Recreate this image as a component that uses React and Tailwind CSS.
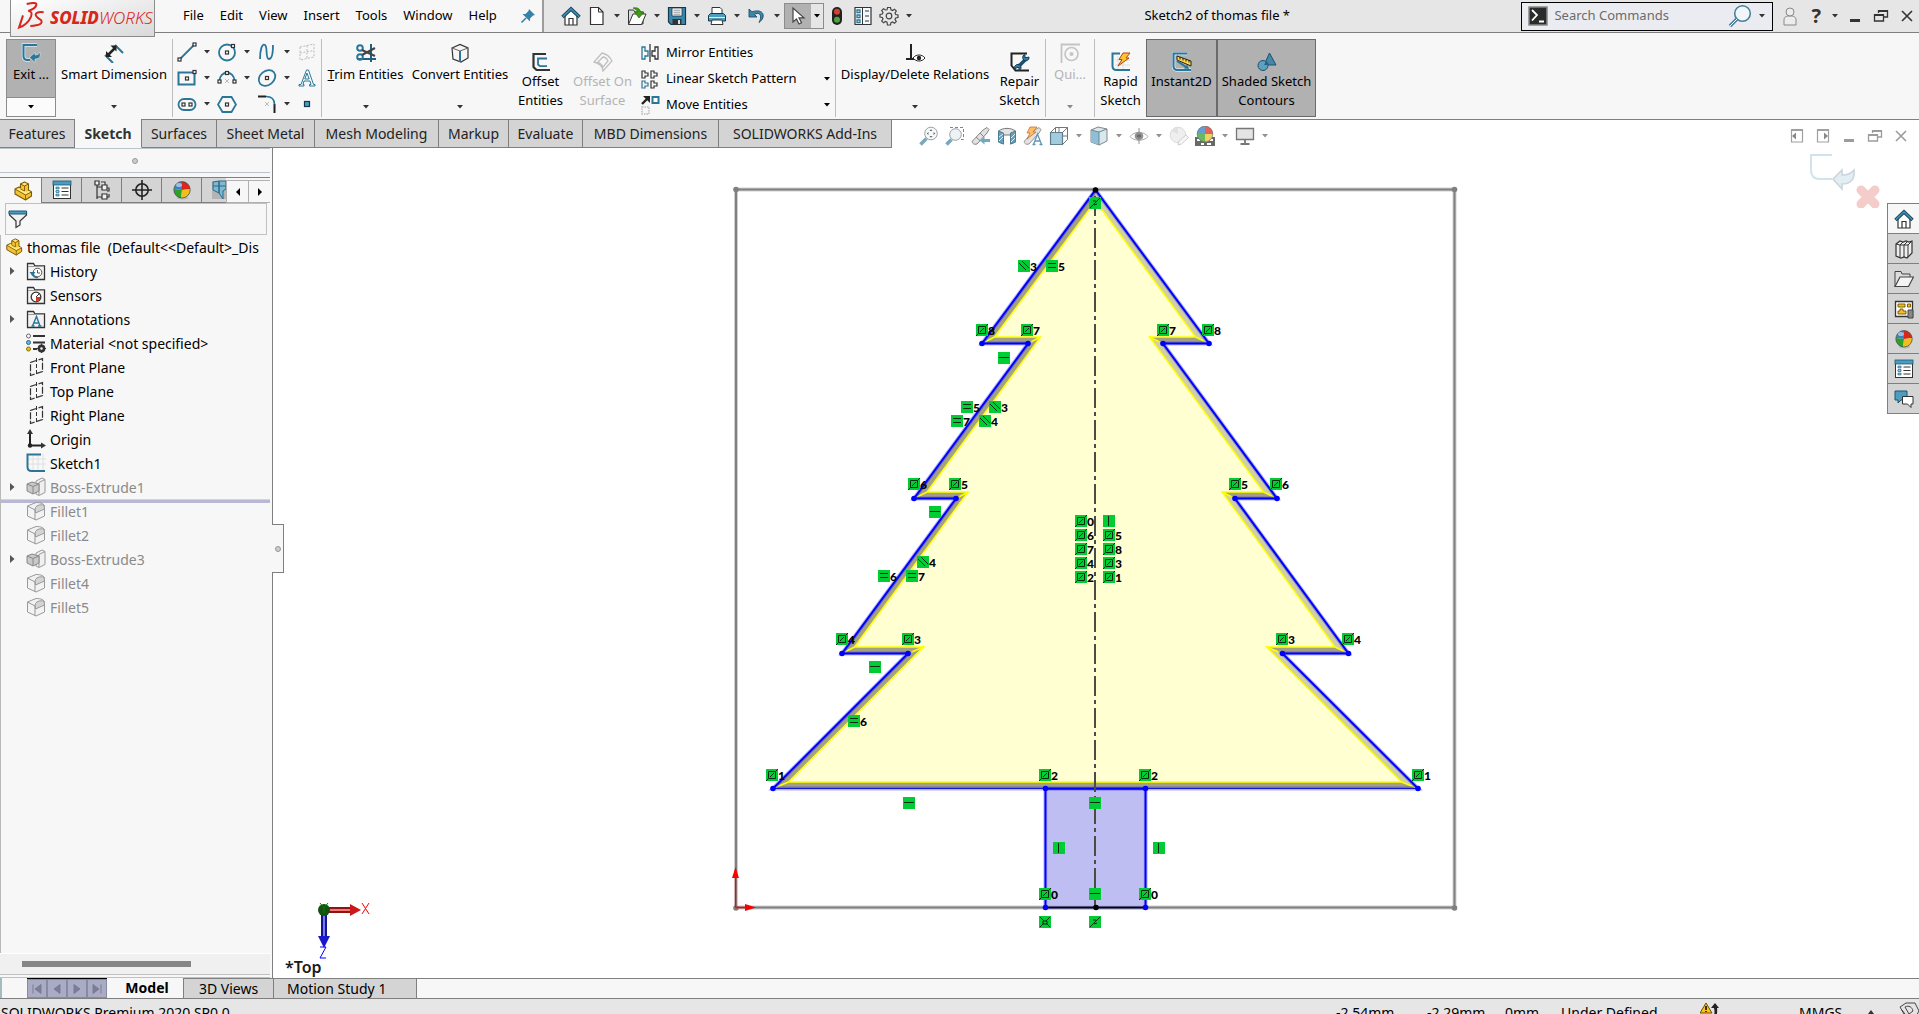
import clsx from "clsx";

// ICON BASE
const Svg = ({ children, size = "w-5 h-5", box = "0 0 20 20", className }) => (
  <svg viewBox={box} className={clsx("shrink-0", size, className)} fill="none" aria-hidden="true">
    {children}
  </svg>
);

const Caret = ({ className = "text-[#333]" }) => (
  <svg viewBox="0 0 8 4" className={clsx("w-2 h-1 shrink-0", className)} aria-hidden="true">
    <path d="M1 0h6l-3 3.4z" fill="currentColor" />
  </svg>
);

const BLUE = "#2a7699";
const DARK = "#333333";

// small square handles used on sketch tools
const Handle = ({ x, y }) => (
  <rect x={x - 1.5} y={y - 1.5} width="3" height="3" fill="#fff" stroke={DARK} strokeWidth="1.2" />
);

// SHARED ICONS
const PartIcon = ({ size }) => (
  <Svg size={size}>
    <path d="M2 8l4-2 1.5 1V3l4-2 4 2v6l3 2v4l-6 4L2 13z" fill="#f4c430" stroke="#7a5a08" strokeWidth="1.1" strokeLinejoin="round" />
    <path d="M3 8.500l3-1.500 6 3 1 .5 3.500-.5 1 1-5 2.500z" fill="#ffe680" />
    <path d="M8.500 3.200l3-1.400 3 1.400-3 1.400z" fill="#ffe680" />
    <path d="M7.500 3l4 2 4-2M11.500 5v5l-4-2M2 8l10.500 6 6-3M12.500 14v5" stroke="#7a5a08" strokeWidth=".9" />
  </Svg>
);

const ListIcon = () => (
  <Svg>
    <rect x="1.500" y="2" width="17" height="16.500" fill="#fff" stroke={DARK} />
    <rect x="1" y="1" width="18" height="4" fill="#4c9cbe" stroke="#1d5876" strokeWidth=".8" />
    <path d="M9.500 8h7M9.500 11.500h7M9.500 15h7" stroke={DARK} />
    <path d="M4 7.200h3v1.600H4zM4 10.700h3v1.600H4zM4 14.200h3v1.600H4z" fill="#fff" stroke={BLUE} />
  </Svg>
);

const BallIcon = () => (
  <Svg>
    <ellipse cx="10.500" cy="18" rx="6" ry="1.500" fill="#bbb" />
    <path d="M10 10V1.500A8.200 8.200 0 0 0 2 9z" fill="#3d7fc4" />
    <path d="M10 10V1.500A8.200 8.200 0 0 1 18.200 9z" fill="#d9271c" />
    <path d="M10 10L1.900 9A8.200 8.200 0 0 0 9 18z" fill="#2ea02a" />
    <path d="M10 10l8.200-1A8.200 8.200 0 0 1 9 18z" fill="#eebf22" />
    <circle cx="10" cy="9.800" r="8.200" stroke="#444" strokeWidth=".7" />
    <ellipse cx="7" cy="5" rx="3" ry="2" fill="#fff" opacity=".5" />
  </Svg>
);

const HouseIcon = () => (
  <Svg>
    <path d="M4 9v10h12V9l-6-6z" fill="#fff" stroke={DARK} strokeWidth="1.200" />
    <path d="M8 19v-6.500h4V19" stroke={DARK} strokeWidth="1.200" />
    <path d="M1.500 11L10 3l8.500 8" stroke="#173f55" strokeWidth="3.600" />
    <path d="M1.800 10.700L10 3l8.200 7.700" stroke="#3c8fb3" strokeWidth="1.700" />
  </Svg>
);

const ChevronBox = ({ right }) => (
  <Svg size="w-4 h-4" box="0 0 16 16">
    <path d="M2.500 2h11v12h-11z" stroke="#a0a0a0" strokeWidth="1.200" />
    <path d="M2 2h12" stroke="#a0a0a0" strokeWidth="2" />
    {right ? <path d="M9 4.500v7L13 8z" fill="#888" /> : <path d="M7 4.500v7L3 8z" fill="#888" />}
  </Svg>
);

const WinMin = () => (
  <Svg size="w-4 h-4" box="0 0 16 16"><path d="M3 12.500h10" stroke="currentColor" strokeWidth="3" /></Svg>
);
const WinRestore = () => (
  <Svg size="w-4 h-4" box="0 0 16 16">
    <path d="M5.500 5V3h9v6H11" stroke="currentColor" strokeWidth="1.300" />
    <path d="M5 3h10M1 7h10" stroke="currentColor" strokeWidth="2" />
    <path d="M1.500 7v6h9V7z" stroke="currentColor" strokeWidth="1.300" />
  </Svg>
);
const WinClose = () => (
  <Svg size="w-4 h-4" box="0 0 16 16"><path d="M3 3l10 10M13 3L3 13" stroke="currentColor" strokeWidth="1.600" /></Svg>
);

// QUICK ACCESS
const quickTools = [
  { name: "Home", icon: <HouseIcon /> },
  {
    name: "New",
    caret: true,
    icon: <Svg><path d="M3.500 1.500h8l4.500 4.500v12.500H3.500z" fill="#fff" stroke={DARK} strokeWidth="1.200" /><path d="M11.500 1.500V6H16" stroke={DARK} /></Svg>,
  },
  {
    name: "Open",
    caret: true,
    icon: (
      <Svg>
        <path d="M1.500 18V4h5l1.500 2h8v12z" fill="#ddd" stroke={DARK} />
        <path d="M1.500 18.500L6 8h13l-4.500 10.500z" fill="#fff" stroke={DARK} />
        <path d="M6 2c5-1 7 1 7.500 4H17l-5 6-4.500-6h3C10 4 8.500 3 6 2z" fill="#3d9b14" stroke="#1f5f06" strokeWidth=".6" />
      </Svg>
    ),
  },
  {
    name: "Save",
    caret: true,
    icon: (
      <Svg>
        <path d="M1.500 1.500h17v17H4l-2.500-2.500z" fill="#3b87aa" stroke="#16384a" strokeWidth="1.200" />
        <path d="M5 2h10v8H5z" fill="#fff" stroke="#16384a" strokeWidth=".8" />
        <path d="M6.500 4.200h7M6.500 6.200h7M6.500 8.200h7" stroke="#777" strokeWidth=".8" />
        <path d="M5.500 13h9v5.500h-9z" fill="#333" /><path d="M11 14h2v4h-2z" fill="#ddd" />
      </Svg>
    ),
  },
  {
    name: "Print",
    caret: true,
    icon: (
      <Svg>
        <path d="M5 8V1.500h8l2 2V8z" fill="#fff" stroke={DARK} />
        <path d="M1.500 9.500l2-2h13l2 2V15h-17z" fill="#4f9dbd" stroke="#16384a" />
        <path d="M2 11.500h16" stroke="#d8eef8" />
        <path d="M5 14h10l1 4.500H4z" fill="#fff" stroke={DARK} />
      </Svg>
    ),
  },
  {
    name: "Undo",
    caret: true,
    icon: <Svg><path d="M2 3v8h8L7.500 8.500C12 5.500 16 9 12 16.500 19.500 11 17 2 5 5.800z" fill="#3c86aa" stroke="#1c4e69" strokeWidth=".9" /></Svg>,
  },
];

const headsUp = [
  {
    name: "Zoom to Fit",
    icon: (
      <Svg>
        <path d="M1.500 18.500l6-6" stroke="#5b90ad" strokeWidth="3.500" />
        <circle cx="12" cy="7.500" r="6.300" fill="#f4f8fa" stroke="#888" />
        <path d="M12 3.200l1.600 1.800h-3.200zM12 11.800l1.600-1.800h-3.200zM7.700 7.500l1.800-1.600v3.200zM16.300 7.500l-1.800-1.600v3.200z" fill="#444" />
      </Svg>
    ),
  },
  {
    name: "Zoom to Area",
    icon: (
      <Svg>
        <path d="M5 1.500h13.500v12H15" stroke="#666" strokeDasharray="3 2" />
        <path d="M1.500 18.500l5-5" stroke="#5b90ad" strokeWidth="3.500" />
        <circle cx="10.500" cy="8.500" r="5.800" fill="#e9f0f4" stroke="#888" />
      </Svg>
    ),
  },
  {
    name: "Previous View",
    icon: (
      <Svg>
        <path d="M1.500 15L12 4l4-2.500 2 2L16 7 6 18c-3 1-5.500-1-4.500-3z" fill="#dcdcdc" stroke="#666" />
        <path d="M9 7l4 4M5 11l4.500 4" stroke="#666" />
        <path d="M9 14.500l4.500-4v2.500H19v3h-5.500v2.500z" fill="#4f93b4" />
      </Svg>
    ),
  },
  {
    name: "Section View",
    icon: (
      <Svg>
        <path d="M1.500 5C6 1.500 14 1.500 18.500 5v11l-5 2V9h-7v9l-5-2z" fill="#ddd" stroke="#555" />
        <path d="M1.500 5l5 2v11l-5-2zM13.500 7l5-2v11l-5 2z" fill="#3f88aa" stroke="#265d78" />
        <path d="M2 11l4-3M2 15l4-4M14 12l4-4M14 16l4-4" stroke="#d7edf6" />
      </Svg>
    ),
  },
  {
    name: "Dynamic Annotation Views",
    icon: (
      <Svg>
        <path d="M1.500 15L12 4l4-2.500 2 2L16 7 6 18c-3 1-5.500-1-4.500-3z" fill="#dcdcdc" stroke="#777" />
        <path d="M7 1h7l-4 5h3l-9 7 3-6H4z" fill="#ffb03a" stroke="#b34a17" strokeWidth=".8" />
        <path d="M10.500 18.500L14.500 8l4 10.500M12 15h5M9.500 18.500h3M16.500 18.500h3" stroke="#3a7fa2" strokeWidth="1.300" />
      </Svg>
    ),
  },
  {
    name: "View Orientation",
    caret: true,
    icon: (
      <Svg>
        <path d="M1.500 6.500l5-5h12v12l-5 5M13.500 6.500l5-5M6.500 1.500V6M10 1.500V6M14 10h4.500" stroke="#555" />
        <path d="M1.500 6.500h12v12h-12z" fill="#8bbfd6" stroke="#3a5f70" strokeWidth="1.200" />
      </Svg>
    ),
  },
  {
    name: "Display Style",
    caret: true,
    icon: (
      <Svg>
        <path d="M2 4l7-3 9 2v12l-8 4-8-3z" fill="#cfe3ec" stroke="#666" />
        <path d="M2 4l8 2v13l-8-3z" fill="#74b0cb" /><path d="M2 4l8 2 8-3M10 6v13" stroke="#4a6a78" />
      </Svg>
    ),
  },
  {
    name: "Hide/Show Items",
    caret: true,
    icon: (
      <Svg>
        <path d="M1 10.500C5 5 15 5 19 10.500 15 15.500 5 15.500 1 10.500z" fill="#fff" stroke="#999" />
        <circle cx="10" cy="10" r="4.300" fill="#777" /><circle cx="10" cy="10" r="1.800" fill="#222" />
        <path d="M10 2v16" stroke="#777" />
      </Svg>
    ),
  },
  {
    name: "Edit Appearance",
    icon: (
      <Svg>
        <circle cx="9" cy="9" r="7.800" fill="#ececec" stroke="#d2d2d2" /><path d="M3 5a8 8 0 0 1 6-3.500v7z" fill="#dadada" />
        <path d="M9 19l1-4 7-6 2.500 2.500-7 6.500z" fill="#f4f4f4" stroke="#c4c4c4" />
      </Svg>
    ),
  },
  {
    name: "Apply Scene",
    caret: true,
    icon: (
      <Svg>
        <path d="M0 11h20v9H0z" fill="#444" />
        <path d="M2 13h3v2H2zM6 17h3v2H6zM15 13h3v2h-3zM12 17h4v2h-4z" fill="#fff" />
        <path d="M10 8V0a8 8 0 0 0-8 8z" fill="#3f86c8" /><path d="M10 8V0a8 8 0 0 1 8 8z" fill="#e03a2c" />
        <path d="M10 8H2a8 8 0 0 0 8 8z" fill="#45a838" /><path d="M10 8h8a8 8 0 0 1-8 8z" fill="#eec63b" />
        <circle cx="10" cy="8" r="7.800" stroke="#555" strokeWidth=".7" />
      </Svg>
    ),
  },
  {
    name: "View Settings",
    caret: true,
    icon: <Svg><path d="M1.500 2.500h17v11h-17z" fill="#dedede" stroke="#555" strokeWidth="1.300" /><path d="M10 14v4M5.500 18h9" stroke="#555" strokeWidth="1.800" /></Svg>,
  },
];

// SKETCH TOOL GRID, row by row
const sketchTools = [
  { name: "Line", caret: true, icon: <Svg><path d="M3 17L17 3" stroke={BLUE} strokeWidth="1.800" /><Handle x={2.500} y={17.500} /><Handle x={17.500} y={2.500} /></Svg> },
  { name: "Circle", caret: true, icon: <Svg><circle cx="10" cy="10.500" r="8" stroke={BLUE} strokeWidth="1.800" /><Handle x={10} y={10.500} /><Handle x={16} y={4} /></Svg> },
  { name: "Spline", caret: true, icon: <Svg><path d="M3 17C3 8 5 1 8 3c3 2 0 14 4 14 3 0 4-7 4-14" stroke={BLUE} strokeWidth="1.800" /></Svg> },
  { name: "Plane", icon: <Svg><path d="M3 5l14-3v13L3 18zM10 3.500v13M3 11l14-2.500" stroke="#bbb" strokeDasharray="2 1.500" /></Svg> },
  { name: "Rectangle", caret: true, icon: <Svg><path d="M1.500 4.500h16v12h-16z" stroke={BLUE} strokeWidth="2" /><Handle x={10} y={10.500} /><Handle x={17.500} y={4} /></Svg> },
  { name: "Arc", caret: true, icon: <Svg><path d="M2.500 13c0-11 15-11 15 0" stroke={BLUE} strokeWidth="1.800" /><path d="M8 11l4 4M12 11l-4 4" stroke="#bbb" /><Handle x={2.500} y={13.500} /><Handle x={17.500} y={13.500} /><Handle x={10} y={5} /></Svg> },
  { name: "Ellipse", caret: true, icon: <Svg><ellipse cx="10" cy="10" rx="9" ry="7" transform="rotate(-40 10 10)" stroke={BLUE} strokeWidth="1.800" /><Handle x={10} y={10} /></Svg> },
  { name: "Text", icon: <Svg><path d="M2 18h5v-1.500H6L7 13h6l1 3.500h-1.500V18H18v-1.500h-1.500L11.500 2h-2L4 16.500H2zM7.800 11L10 5l2.200 6z" fill="#fff" stroke={BLUE} /></Svg> },
  { name: "Slot", caret: true, icon: <Svg><rect x="1.500" y="5" width="17" height="11" rx="5.500" stroke={BLUE} strokeWidth="1.800" /><Handle x={6.500} y={10.500} /><Handle x={13.500} y={10.500} /></Svg> },
  { name: "Polygon", icon: <Svg><path d="M5.500 3h9l4.500 7.500L14.500 18h-9L1 10.500z" stroke={BLUE} strokeWidth="1.800" /><Handle x={10} y={10.500} /></Svg> },
  { name: "Fillet", caret: true, icon: <Svg><path d="M1 2.500h8M17.500 10v9" stroke="#222" strokeWidth="2" /><path d="M9 2.500c6 0 8.500 3 8.500 8" stroke={BLUE} strokeWidth="1.600" /><path d="M8 8l4 4M12 8l-4 4" stroke="#bbb" /></Svg> },
  { name: "Point", icon: <Svg><rect x="7.500" y="7.500" width="5" height="5" fill="#4a9dc2" stroke="#16384a" strokeWidth="1.200" /></Svg> },
];

const patternTools = [
  {
    name: "Mirror Entities",
    icon: <Svg><path d="M2 4h3v4h3v5H5v3H2z" stroke={BLUE} strokeWidth="1.300" /><path d="M18 4h-3v4h-3v5h3v3h3z" stroke={DARK} strokeWidth="1.300" /><path d="M10 1v18" stroke="#000" /></Svg>,
  },
  {
    name: "Linear Sketch Pattern",
    caret: true,
    icon: (
      <Svg>
        <path d="M2 2h3v2h3v3H5v2H2zM11 2h3v2h3v3h-3v2h-3zM11 12h3v2h3v3h-3v2h-3z" stroke={DARK} strokeWidth="1.200" />
        <path d="M2 12h3v2h3v3H5v2H2z" stroke={BLUE} strokeWidth="1.200" />
      </Svg>
    ),
  },
  {
    name: "Move Entities",
    caret: true,
    icon: (
      <Svg>
        <path d="M2 9l6-6" stroke="#222" strokeWidth="2.400" /><path d="M3 1h7v7z" fill="#222" />
        <rect x="12.500" y="2" width="6" height="6" fill="#fff" stroke={BLUE} strokeWidth="2" />
        <rect x="2" y="12" width="7" height="7" stroke="#bbb" strokeDasharray="1.500 1" strokeWidth="1.500" />
      </Svg>
    ),
  },
];

const ExitIcon = () => (
  <Svg>
    <path d="M16 2H2.500v11q0 4 4 4H9" stroke="#dcecf4" strokeWidth="3.500" />
    <path d="M16 2H2.500v11q0 4 4 4H9" stroke={BLUE} strokeWidth="2" />
    <path d="M8.500 14.500l5.500-5V12c3 0 4-1 5-3 1 5-1 7-5 7v3.500z" fill={BLUE} stroke="#dcecf4" strokeWidth=".6" />
  </Svg>
);
const DimensionIcon = () => (
  <Svg>
    <path d="M11 2l8 8M1 12l8 8" stroke={BLUE} strokeWidth="2" />
    <path d="M4 12L11 5" stroke="#222" strokeWidth="2.500" /><path d="M6.500 2.500h6v6zM2 8v6h6z" fill="#222" />
  </Svg>
);
const TrimIcon = () => (
  <Svg>
    <path d="M1 16h19M15 1v18" stroke="#1f5f80" strokeWidth="2" />
    <circle cx="4" cy="5" r="2.800" stroke={BLUE} strokeWidth="2" /><circle cx="4" cy="14" r="2.800" stroke={BLUE} strokeWidth="2" />
    <path d="M6 7l13 6M6 12l13-7" stroke="#444" strokeWidth="2" />
  </Svg>
);
const ConvertIcon = () => (
  <Svg>
    <path d="M2 5l8-3.500L18 5v10l-7 4-8-3z" fill="#f5f5f5" stroke={DARK} strokeWidth="1.200" />
    <path d="M2 5l8 3 8-3" stroke="#666" /><path d="M10 8v11" stroke={BLUE} strokeWidth="2" />
  </Svg>
);
const OffsetIcon = () => (
  <Svg><path d="M15 2H2.500v13l3 3H19" stroke="#333" strokeWidth="2.200" /><path d="M16 6.500H7v6l2 1.700h7" stroke={BLUE} strokeWidth="1.800" /></Svg>
);
const OffsetSurfaceIcon = () => (
  <Svg><path d="M1 10L9 1c5 1 8 4 10 8l-9 10c0-4-4-8-9-9zM5 10l5-5c2 0 4 2 5 4l-5 6c-1-2-3-4-5-5z" stroke="#c0c0c0" strokeWidth="1.300" /></Svg>
);
const RelationsIcon = () => (
  <Svg>
    <path d="M6 1v14M1 16h11" stroke="#222" strokeWidth="2" />
    <path d="M8 15c3-4 9-4 12 0-3 4-9 4-12 0z" fill="#fff" stroke="#222" /><circle cx="14" cy="15" r="2.200" fill="#222" />
  </Svg>
);
const RepairIcon = () => (
  <Svg>
    <path d="M17 1.500H1.500v12l4 5H19" stroke="#222" strokeWidth="2" />
    <path d="M8 15l8-8" stroke="#1e4f6a" strokeWidth="3.500" />
    <path d="M19 5a3.200 3.200 0 1 1-4-2.500v3h2zM5 17a3.200 3.200 0 1 1 4 1.500v-3H7z" fill="#2f7da2" stroke="#173f55" />
  </Svg>
);
const SnapIcon = () => (
  <Svg><path d="M1.500 20V1.500H20" stroke="#c4c4c4" strokeWidth="1.800" /><circle cx="11.500" cy="11" r="6.500" stroke="#c4c4c4" strokeWidth="1.600" /><circle cx="11.500" cy="11" r="2" fill="#c4c4c4" /></Svg>
);
const RapidIcon = () => (
  <Svg>
    <path d="M7 4v14M12 4v14M4 8h15M4 13h15" stroke="#ddd" />
    <path d="M9 1.500H1.500V14q0 4 4 4H19" stroke={BLUE} strokeWidth="2" />
    <path d="M12 1h7l-4 5h3L7 14l4-6.500H8z" fill="#ffc62e" stroke="#b3431a" />
  </Svg>
);
const InstantIcon = () => (
  <Svg>
    <path d="M15 1.500H1.500V14q0 4 4 4H19" stroke="#dbe9f0" strokeWidth="3.600" />
    <path d="M15 1.500H1.500V14q0 4 4 4H19" stroke={BLUE} strokeWidth="2" />
    <path d="M5 4l14 5v5L5 8z" fill="#ffd83c" stroke="#222" /><path d="M8 5v2.500M11 6v2.500M14 7v2.500M17 8v2.500" stroke="#222" />
    <path d="M5 9l9 6" stroke={BLUE} strokeWidth="2" /><path d="M17 17l-5-.5 3-4z" fill={BLUE} />
  </Svg>
);
const ShadedIcon = () => (
  <Svg>
    <path d="M12.500 1L19 13H7z" fill="#4587a8" stroke="#1c5270" /><circle cx="6" cy="13.500" r="5" fill="#5fa0bf" stroke="#1c5270" /><path d="M7 13h4.500a5 5 0 0 0-2.500-4z" fill="#22658a" />
  </Svg>
);

// FEATURE TREE ICONS
const FolderIcon = ({ children }) => (
  <Svg><path d="M1.500 18.500v-16h6l1.500 2.500h9.500v13.500z" fill="#f2f2f2" stroke={DARK} strokeWidth="1.300" /><path d="M2 5.500h16" stroke="#999" />{children}</Svg>
);
const PlaneIcon = () => (
  <Svg><path d="M4.500 5.500l12-4v13l-12 4z" stroke={DARK} strokeWidth="1.200" strokeDasharray="7 1.500" /><path d="M10.500 1v18" stroke={DARK} strokeDasharray="4 2" /></Svg>
);
const ExtrudeIcon = () => (
  <Svg>
    <path d="M10 4l6-3 3 1.500v13l-6 3-3-1.500z" fill="#f0f0f0" stroke="#999" /><path d="M13 5.500l6-3M13 5.500V18" stroke="#999" />
    <path d="M1 7l5-2 7 2v7l-6 3-6-3z" fill="#c9c9c9" stroke="#888" /><path d="M1 7l6 2.500L13 7M7 9.500V17" stroke="#888" />
  </Svg>
);
const FilletIcon = () => (
  <Svg>
    <path d="M1.500 5L10 1.500c5 0 8.500 1 8.500 5v8.500L10 19l-8.500-4z" fill="#f2f2f2" stroke="#999" />
    <path d="M9 9c0-3 2-6 9-5l.5 4L9.500 12z" fill="#d4d4d4" stroke="#999" /><path d="M1.500 5L9 9v10" stroke="#999" />
  </Svg>
);

const tree = [
  {
    label: "History",
    open: true,
    icon: <FolderIcon><circle cx="11.500" cy="11.500" r="4.300" fill="#fff" stroke="#555" /><path d="M11.500 9v3h2.500" stroke="#555" /><path d="M3.500 11h6l-3 4z" fill={BLUE} /><path d="M6 11c0 4 3 6 6 5.500" stroke={BLUE} strokeWidth="1.500" /></FolderIcon>,
  },
  { label: "Sensors", icon: <FolderIcon><circle cx="10" cy="12" r="4.800" fill="#fff" stroke="#333" strokeWidth="1.300" /><path d="M10 12l3-3" stroke="#333" /><path d="M10 12h4.500a4 4 0 0 1-4.500 4z" fill="#d9341e" /></FolderIcon> },
  { label: "Annotations", open: true, icon: <FolderIcon><path d="M6.500 17L10.500 7.500 14 17M8 14h5M5.500 17h3M12 17h3.500" stroke={BLUE} strokeWidth="1.400" /></FolderIcon> },
  {
    label: "Material <not specified>",
    icon: (
      <Svg>
        <circle cx="2.500" cy="3" r="2" fill="#fff" stroke="#666" /><circle cx="2.500" cy="9.500" r="2" fill="#67b7dc" stroke="#2a6a88" /><circle cx="2.500" cy="16" r="2" fill="#f4c020" stroke="#8a6a08" />
        <path d="M7 3h12M7 9.500h12M7 16h4" stroke={DARK} strokeWidth="2" /><circle cx="15.500" cy="15.500" r="2.600" stroke={DARK} strokeWidth="2.600" />
        <path d="M15.500 10.500v10M10.500 15.500h10" stroke={DARK} strokeWidth="1.200" strokeDasharray="2 6" />
      </Svg>
    ),
  },
  { label: "Front Plane", icon: <PlaneIcon /> },
  { label: "Top Plane", icon: <PlaneIcon /> },
  { label: "Right Plane", icon: <PlaneIcon /> },
  { label: "Origin", icon: <Svg><path d="M4 3v13.500h13" stroke="#222" strokeWidth="2" /><path d="M4 0l3 5H1zM20 16.500l-5-3v6z" fill="#333" /><circle cx="4" cy="16.500" r="2.200" fill="#222" /></Svg> },
  { label: "Sketch1", icon: <Svg><path d="M7 1v17M12 1v17M17 1v17M2 6h18M2 11h18" stroke="#e0e0e0" /><path d="M15 1.500H1.500V14q0 4 4 4H19" stroke={BLUE} strokeWidth="2" /></Svg> },
  { label: "Boss-Extrude1", open: true, off: true, icon: <ExtrudeIcon />, rollback: true },
  { label: "Fillet1", off: true, icon: <FilletIcon /> },
  { label: "Fillet2", off: true, icon: <FilletIcon /> },
  { label: "Boss-Extrude3", open: true, off: true, icon: <ExtrudeIcon /> },
  { label: "Fillet4", off: true, icon: <FilletIcon /> },
  { label: "Fillet5", off: true, icon: <FilletIcon /> },
];

const managerTabs = [
  { name: "PropertyManager", icon: <ListIcon /> },
  {
    name: "ConfigurationManager",
    icon: <Svg><path d="M3 1h4v4H3zM5 5v14M5 7h5M5 17h5M10 5h5v5h-5zM10 14h5v5h-5zM9 2h4v3M15 8h2v3h-2M15 17h2v-3" stroke={DARK} strokeWidth="1.200" fill="#f2f2f2" /></Svg>,
  },
  { name: "DimXpertManager", icon: <Svg><circle cx="10" cy="10" r="6.200" stroke="#222" strokeWidth="1.600" /><path d="M10 0v20M0 10h20" stroke="#222" strokeWidth="1.600" /></Svg> },
  { name: "DisplayManager", icon: <BallIcon /> },
];

const taskPane = [
  { name: "Resources", icon: <HouseIcon /> },
  {
    name: "Design Library",
    icon: <Svg><path d="M2 5l4-3 3 1 3-1 3 1 3-1v12l-5 5-3-1-3 1-5-2z" fill="#eee" stroke={DARK} strokeWidth="1.200" /><path d="M6 6v12M10 6v12M14 6v12M2 5l4 1 3-3M6 6l4 0 3-3M10 6h4l3-3" stroke={DARK} /></Svg>,
  },
  { name: "File Explorer", icon: <Svg><path d="M1 17.500V2.500h6l1 2.500h8v3" fill="#ddd" stroke="#444" /><path d="M1 17.500L6 8h13.500l-5 9.500z" fill="#f4f4f4" stroke="#444" strokeWidth="1.200" /></Svg> },
  {
    name: "View Palette",
    icon: (
      <Svg>
        <path d="M1.500 2.500h17v15h-17z" fill="#fff" stroke={DARK} strokeWidth="1.300" />
        <path d="M4 5h7v3H4zM13.500 5h3v3h-3zM4 15v-3h2v-2h3v2h3v3z" fill="#f4c020" stroke="#6d5205" strokeWidth=".9" /><path d="M14 11h5v8h-5z" fill="#888" stroke="#444" />
      </Svg>
    ),
  },
  { name: "Appearances", icon: <BallIcon /> },
  { name: "Custom Properties", icon: <ListIcon /> },
  {
    name: "Forum",
    icon: <Svg><path d="M1 2h12v9H7l-3 3v-3H1z" fill="#4f9dbd" stroke="#1c5270" /><path d="M8.500 7.500h10.500V15h-2v3.500L13.500 15h-5z" fill="#fff" stroke={DARK} /></Svg>,
  },
];

// SKETCH GEOMETRY (graphics area units)
const treeOutline = "1095.500,190 1209,343.500 1163,343.500 1277,498.500 1235,498.500 1348.500,653.500 1282.500,653.500 1418,788.500 773,788.500 908,653.500 842,653.500 956,498.500 914,498.500 1028,343.500 982,343.500";
const treeFace = "1095.500,201 1195.500,337 1149.500,337 1263.500,492 1222,492 1335,647 1266.500,647 1401.500,782 788.500,782 923.500,647 854.500,647 968,492 927,492 1040.500,337 994.500,337";

const sketchPoints = [
  [1209, 343.5], [1163, 343.5], [1277, 498.5], [1235, 498.5], [1348.5, 653.5], [1282.5, 653.5], [1418, 788.5],
  [773, 788.5], [908, 653.5], [842, 653.5], [956, 498.5], [914, 498.5], [1028, 343.5], [982, 343.5],
  [1045.5, 788.5], [1145.5, 788.5], [1045.5, 907.5], [1145.5, 907.5],
];

// type, x, y, number
const relations = [
  ["mid", 1095, 203], ["par", 1024, 266, 3], ["eq", 1052, 266, 5],
  ["sym", 982, 330, 8], ["sym", 1027, 330, 7], ["sym", 1163, 330, 7], ["sym", 1208, 330, 8],
  ["hor", 1004, 358], ["eq", 967, 407, 5], ["par", 995, 407, 3], ["eq", 957, 421, 7], ["par", 985, 421, 4],
  ["sym", 914, 484, 6], ["sym", 955, 484, 5], ["sym", 1235, 484, 5], ["sym", 1276, 484, 6], ["hor", 935, 512],
  ["sym", 1081, 521, 0], ["ver", 1109, 521], ["sym", 1081, 535, 6], ["sym", 1109, 535, 5],
  ["sym", 1081, 549, 7], ["sym", 1109, 549, 8], ["sym", 1081, 563, 4], ["sym", 1109, 563, 3],
  ["sym", 1081, 577, 2], ["sym", 1109, 577, 1],
  ["par", 923, 562, 4], ["eq", 884, 576, 6], ["eq", 912, 576, 7],
  ["sym", 842, 639, 4], ["sym", 908, 639, 3], ["sym", 1282, 639, 3], ["sym", 1348, 639, 4], ["hor", 875, 667],
  ["eq", 854, 721, 6], ["sym", 772, 775, 1], ["sym", 1045, 775, 2], ["sym", 1145, 775, 2], ["sym", 1418, 775, 1],
  ["hor", 909, 803], ["hor", 1095, 803], ["ver", 1059, 848], ["ver", 1159, 848],
  ["sym", 1045, 894, 0], ["hor", 1095, 894], ["sym", 1145, 894, 0], ["coin", 1045, 922], ["mid", 1095, 922],
];

const relationMarks = {
  hor: "M-5-.5h10",
  ver: "M-.5-5v10",
  eq: "M-4-2.500h8M-4 1.500h8",
  par: "M-5-3l7 7M-2-5l7 7",
  sym: "M-3.500-3.500h7v7h-7zM-2 2l4-4M4-4l2-2M-6 6l2-2",
  mid: "M-5 5L5-5M-2-2l3 0M-1 2l3-1",
  coin: "M-5 5l4-4M5 5L1 1M-5-5l4 4M5-5L1-1M-2-1h4v3h-4z",
};

function Relation({ type, x, y, num }) {
  return (
    <g transform={`translate(${x} ${y})`}>
      <rect x="-6" y="-6" width="12" height="12" fill="#00cc33" />
      <path d={relationMarks[type]} stroke="#0b2a10" strokeWidth="1" />
      {num !== undefined && (
        <text x="6" y="5" className="font-['Lato'] font-black text-[12px]" fill="#000">{num}</text>
      )}
    </g>
  );
}

function SketchCanvas() {
  return (
    <svg viewBox="273 148 1646 830" preserveAspectRatio="xMinYMin meet" className="absolute inset-0 w-full h-full" fill="none">
      {/* BASE SQUARE */}
      <rect x="736" y="189.500" width="718.500" height="718" stroke="#cfcfcf" strokeWidth="4" />
      <rect x="736" y="189.500" width="718.500" height="718" stroke="#808080" strokeWidth="2" />
      <circle cx="736" cy="189.500" r="2.800" fill="#808080" />
      <circle cx="1454.500" cy="189.500" r="2.800" fill="#808080" />
      <circle cx="1454.500" cy="908" r="2.800" fill="#808080" />
      <circle cx="736" cy="908" r="2.800" fill="#808080" />

      {/* TRUNK */}
      <rect x="1045.500" y="788.500" width="100" height="119" fill="#bebef2" stroke="#a9a9f5" strokeWidth="4" />
      <path d="M1045.500 907.500v-119h100v119" stroke="#0000ff" strokeWidth="2" />
      <path d="M1046 907.500h99" stroke="#000" strokeWidth="2" />

      {/* TREE BODY */}
      <polygon points={treeOutline} fill="#a3a182" />
      <path d="M1095.500 190L1209 343.500l-13.500-6.500L1095.500 201zM1149.500 337l13.500 6.500L1277 498.500l-13.500-6.500zM1222 492l13 6.500 113.500 155-13.500-6.500zM1266.500 647l16 6.500L1418 788.500l-16.500-6.500z" fill="#d0d0a4" />
      <polygon points={treeFace} fill="#ffffd2" stroke="#ffff00" strokeWidth="1.500" />
      <path d="M982 343.500l12.500-6.500M1028 343.500l12.500-6.500M1209 343.500l-13.500-6.500M1163 343.500l-13.500-6.500M914 498.500l13-6.500M956 498.500l12-6.500M1277 498.500l-13.500-6.500M1235 498.500l-13-6.500M842 653.500l12.500-6.500M908 653.500l15.500-6.500M1348.500 653.500l-13.500-6.500M1282.500 653.500l-16-6.500M773 788.500l15.500-6.500M1418 788.500l-16.500-6.500" stroke="#ffff00" strokeWidth="1.500" />
      <polygon points={treeOutline} stroke="#0000ff" strokeOpacity=".3" strokeWidth="4" />
      <path d="M773 788.500l135-135h-66L956 498.500h-42L1028 343.500h-46L1095.500 190 1209 343.500h-46L1277 498.500h-42L1348.500 653.500h-66L1418 788.500" stroke="#0000ff" strokeWidth="2" />
      <path d="M773 788.500h645" stroke="#1414d8" strokeWidth="1.200" />
      <path d="M1045.500 788.500h100" stroke="#0000ff" strokeWidth="2" />

      {/* CENTERLINE */}
      <path d="M1095 196v712" stroke="#4c4c44" strokeWidth="2" strokeDasharray="20 4 4 4" />

      {sketchPoints.map(([x, y]) => (
        <circle key={`${x}-${y}`} cx={x} cy={y} r="2.800" fill="#0000ff" />
      ))}
      <circle cx="1095.500" cy="190" r="2.800" fill="#000" />
      <circle cx="1096" cy="907.500" r="2.800" fill="#000" />

      {relations.map(([type, x, y, num]) => (
        <Relation key={`${x}-${y}`} type={type} x={x} y={y} num={num} />
      ))}

      {/* ORIGIN */}
      <path d="M735.500 907.500V870M735.500 907.500H750" stroke="#ff0000" strokeWidth="1.300" />
      <path d="M735.500 867l3.500 11h-7zM756 907.500l-11-3.500v7z" fill="#ff0000" />

      {/* TRIAD */}
      <path d="M328 910h24" stroke="#8c1414" strokeWidth="6" />
      <path d="M328 910h24" stroke="#f07878" strokeWidth="2" />
      <path d="M350 904l11 6-11 6z" fill="#cc1818" />
      <path d="M324 914v24" stroke="#14148c" strokeWidth="6" />
      <path d="M324 914v24" stroke="#7878f0" strokeWidth="2" />
      <path d="M318 936h12l-6 12z" fill="#1818cc" />
      <circle cx="324" cy="910" r="6" fill="#145014" />
      <path d="M320 903l4 5 4-5M324 908v5" stroke="#008000" />
      <path d="M362 903l7 11M369 903l-7 11" stroke="#ff0000" />
      <path d="M320 947h6l-6 11h6" stroke="#0000ff" />
      <text x="285" y="973" className="font-['Noto_Sans'] font-semibold text-[16px]" fill="#1a1a1a">*Top</text>
    </svg>
  );
}

// RIBBON PARTS
const Divider = () => <div className="w-px h-[78px] bg-[#bdbdbd] shrink-0" />;

function TallButton({ icon, label, width, off }) {
  return (
    <button className={clsx("h-[78px] flex flex-col items-center pt-1 shrink-0", width, off && "text-[#b4b4b4]")}>
      {icon}
      <span className="mt-px leading-5 whitespace-nowrap">{label}</span>
      <Caret className={clsx("mt-auto mb-2", off ? "text-[#888]" : "text-[#333]")} />
    </button>
  );
}

function WrapButton({ icon, lines, width, off, pressed }) {
  return (
    <button
      className={clsx(
        "h-[78px] flex flex-col items-center shrink-0 leading-[19px] whitespace-nowrap",
        width,
        off && "text-[#b4b4b4]",
        pressed ? "bg-[#b1b1b1] border border-[#6a6a6a] pt-3" : "pt-[13px]"
      )}
    >
      {icon}
      {lines.map((line) => (
        <span key={line}>{line}</span>
      ))}
    </button>
  );
}

function TitleBar() {
  return (
    <header className="relative z-10 h-[33px] flex items-center bg-[#e6e6e6] border-b border-[#7f7f7f] shrink-0">
      <div className="h-full w-[544px] pl-[10px] flex items-center border-r-2 border-[#9c9c9c] bg-[#f7f7f7] shrink-0">
        <div className="self-start w-[145px] h-[37px] shrink-0 flex items-center pl-[5px] border border-t-0 border-[#8c8c8c] bg-linear-to-br from-white to-[#d9d9d9] text-[#d9261c] text-[17px] italic">
          <Svg size="w-[30px] h-[30px]" box="45 0 90 90" className="self-start mr-1">
            <path d="M77 12Q108 4 106 15Q104 25 82 33Q96 34 90 50Q80 74 54 83L66 46M128 37Q104 34 104 44Q104 50 120 60Q130 76 88 78" stroke="#d9261c" strokeWidth="6" />
          </Svg>
          <span className="font-extrabold">SOLID</span>
          <span className="font-light">WORKS</span>
        </div>
        <nav className="ml-7 flex items-center gap-4">
          {["File", "Edit", "View", "Insert", "Tools", "Window", "Help"].map((item) => (
            <button key={item}>{item}</button>
          ))}
        </nav>
        <button aria-label="Pin menu" className="ml-auto mr-1.5">
          <Svg size="w-4 h-4" box="0 0 16 16" className="text-[#3583a8]">
            <path d="M9 1l6 6-2 .5-3 3v3L2.500 6h3l3-3z" fill="currentColor" /><path d="M6 10l-4.500 4.500" stroke="currentColor" strokeWidth="1.600" />
          </Svg>
        </button>
      </div>

      {/* QUICK ACCESS */}
      <div className="ml-[17px] flex items-center gap-[3px]">
        <div className="flex items-center gap-1.5">
          {quickTools.map((tool) => (
            <button key={tool.name} aria-label={tool.name} className="flex items-center gap-1.5">
              {tool.icon}
              {tool.caret && <Caret />}
            </button>
          ))}
        </div>
        <button aria-label="Select" className="h-[26px] w-10 flex items-center border border-[#8c8c8c]">
          <span className="h-full w-[26px] flex items-center justify-center bg-[#b1b1b1]">
            <Svg><path d="M5 2v14l3.500-3 2.500 5 2.500-1.200-2.500-5H16z" fill="#fff" stroke="#444" strokeWidth="1.200" /></Svg>
          </span>
          <Caret className="ml-0.5" />
        </button>
        <div className="flex items-center gap-1.5">
          <button aria-label="Rebuild">
            <Svg><rect x="5" y="1" width="10" height="18" rx="5" fill="#222" /><circle cx="10" cy="5.800" r="3" fill="#d6402e" /><circle cx="10" cy="13.800" r="3" fill="#4da63c" /></Svg>
          </button>
          <button aria-label="File properties">
            <Svg><path d="M2 1.500h16v17H2z" fill="#f4f8fa" stroke="#333" strokeWidth="1.200" /><path d="M9.500 2v16M12 5h4M12 10h4M12 15h4" stroke="#333" /><path d="M4 4h3v2.500H4zM4 9h3v2.500H4zM4 14h3v2.500H4z" stroke={BLUE} strokeWidth="1.300" /></Svg>
          </button>
          <button aria-label="Options" className="flex items-center gap-1.5">
            <Svg>
              <circle cx="10" cy="10" r="2.800" stroke="#444" strokeWidth="1.200" />
              <path d="M8.500 1.500h3l.5 2.300 1.500.7 2-1.300 1.800 1.800-1.300 2 .7 1.500 2.300.5v2.500l-2.300.5-.7 1.500 1.300 2-1.800 1.800-2-1.300-1.500.7-.5 2.300h-3L8 16.200l-1.500-.7-2 1.300L2.700 15 4 13l-.7-1.500L1 11V8.500L3.300 8 4 6.500l-1.300-2 1.800-1.800 2 1.300L8 3.800z" stroke="#444" strokeWidth="1.200" />
            </Svg>
            <Caret />
          </button>
        </div>
      </div>

      <div className="flex-1 text-center whitespace-nowrap">Sketch2 of thomas file *</div>

      {/* SEARCH */}
      <div className="h-[29px] w-[252px] flex items-center bg-[#ebecf1] border border-black px-1.5 shrink-0">
        <Svg><path d="M1 1h18v18H1z" fill="#2b2b2b" stroke="#888" strokeWidth="1.500" /><path d="M4 4l5 5-5 5.500M11 15.500h5" stroke="#fff" strokeWidth="1.800" /></Svg>
        <input aria-label="Search Commands" placeholder="Search Commands" className="ml-1.5 w-0 flex-1 bg-transparent outline-none placeholder:text-[#6b6b6b]" />
        <button aria-label="Search" className="flex items-center gap-1.5">
          <Svg size="w-6 h-6" box="0 0 24 24"><circle cx="14.500" cy="9.500" r="7.800" fill="#f2f6f9" stroke="#47809f" strokeWidth="1.600" /><path d="M2 22l7-7" stroke="#47809f" strokeWidth="3.500" /><path d="M2 22l7-7" stroke="#fff" /></Svg>
          <Caret />
        </button>
      </div>
      <div className="ml-[7px] mr-1 flex items-center text-[#333] shrink-0">
        <button aria-label="Login">
          <Svg><path d="M4 19v-5c0-3 2-4 6-4s6 1 6 4v5z" fill="#ececec" stroke="#888" /><circle cx="10" cy="6" r="4" fill="#ececec" stroke="#888" /></Svg>
        </button>
        <button aria-label="Help" className="ml-[11px] text-[20px] font-bold leading-5">?</button>
        <button aria-label="Help menu" className="ml-2.5"><Caret /></button>
        <button aria-label="Minimize" className="ml-2"><WinMin /></button>
        <button aria-label="Restore" className="ml-2.5"><WinRestore /></button>
        <button aria-label="Close" className="ml-2.5"><WinClose /></button>
      </div>
    </header>
  );
}

function Ribbon() {
  return (
    <div className="h-[87px] flex items-start pt-1.5 pl-1.5 bg-[#f7f7f7] border-b border-[#7f7f7f] shrink-0">
      <button className="w-[50px] h-[78px] flex flex-col items-center border border-[#8c8c8c] bg-[#fbfbfb] shrink-0">
        <span className="w-full h-[58px] pt-[3px] flex flex-col items-center bg-[#b1b1b1] border-b border-[#8c8c8c]">
          <ExitIcon />
          <span className="mt-px leading-5">Exit ...</span>
        </span>
        <Caret className="mt-auto mb-[7px]" />
      </button>
      <TallButton icon={<DimensionIcon />} label="Smart Dimension" width="w-[116px]" />
      <Divider />

      <div className="w-[148px] pl-1 grid grid-cols-[40px_40px_40px_20px] grid-rows-[26px_26px_26px] items-center shrink-0">
        {sketchTools.map((tool) => (
          <button key={tool.name} aria-label={tool.name} className="flex items-center gap-1.5">
            {tool.icon}
            {tool.caret && <Caret />}
          </button>
        ))}
      </div>
      <Divider />

      <TallButton icon={<TrimIcon />} label={<><u>T</u>rim Entities</>} width="w-[87px]" />
      <TallButton icon={<ConvertIcon />} label="Convert Entities" width="w-[102px]" />
      <WrapButton icon={<OffsetIcon />} lines={["Offset", "Entities"]} width="w-[59px]" />
      <WrapButton icon={<OffsetSurfaceIcon />} lines={["Offset On", "Surface"]} width="w-[65px]" off />

      <div className="w-[200px] pt-px pl-[5px] pr-1 shrink-0">
        {patternTools.map((tool) => (
          <button key={tool.name} className="w-full h-[26px] flex items-center gap-1.5">
            {tool.icon}
            <span>{tool.name}</span>
            {tool.caret && <Caret className="ml-auto" />}
          </button>
        ))}
      </div>
      <Divider />

      <TallButton icon={<RelationsIcon />} label="Display/Delete Relations" width="w-[158px]" />
      <WrapButton icon={<RepairIcon />} lines={["Repair", "Sketch"]} width="w-[51px]" />
      <Divider />
      <TallButton icon={<SnapIcon />} label="Qui..." width="w-12" off />
      <Divider />
      <WrapButton icon={<RapidIcon />} lines={["Rapid", "Sketch"]} width="w-[51px]" />
      <WrapButton icon={<InstantIcon />} lines={["Instant2D"]} width="w-[71px]" pressed />
      <WrapButton icon={<ShadedIcon />} lines={["Shaded Sketch", "Contours"]} width="w-[99px]" pressed />
    </div>
  );
}

function CommandTabs() {
  const tabs = [
    { name: "Features", width: "w-[75px]" },
    { name: "Sketch", width: "w-[67px]" },
    { name: "Surfaces", width: "w-[75px]" },
    { name: "Sheet Metal", width: "w-[98px]" },
    { name: "Mesh Modeling", width: "w-[124px]" },
    { name: "Markup", width: "w-[70px]" },
    { name: "Evaluate", width: "w-[74px]" },
    { name: "MBD Dimensions", width: "w-[136px]" },
    { name: "SOLIDWORKS Add-Ins", width: "w-[173px]" },
  ];
  return (
    <div className="h-7 flex items-center bg-white text-[14px] shrink-0">
      <div className="h-full flex">
        {tabs.map((tab) => (
          <button
            key={tab.name}
            className={clsx(
              "border-r border-b border-[#7f7f7f] whitespace-nowrap shrink-0",
              tab.width,
              tab.name === "Sketch" ? "-mt-px bg-[#f7f7f7] font-bold text-[#333] border-b-[#f7f7f7]" : "bg-[#d4d4d4] text-[#222]"
            )}
          >
            {tab.name}
          </button>
        ))}
      </div>
      <div className="ml-[27px] pt-1 flex items-center gap-1.5 opacity-80">
        {headsUp.map((tool) => (
          <button key={tool.name} aria-label={tool.name} className="flex items-center gap-1.5">
            {tool.icon}
            {tool.caret && <Caret className="text-[#777]" />}
          </button>
        ))}
      </div>
      <div className="ml-auto mr-2.5 pt-1 flex items-center gap-2.5 text-[#9c9c9c]">
        <button aria-label="Previous window"><ChevronBox /></button>
        <button aria-label="Next window"><ChevronBox right /></button>
        <button aria-label="Minimize document"><WinMin /></button>
        <button aria-label="Restore document"><WinRestore /></button>
        <button aria-label="Close document"><WinClose /></button>
      </div>
    </div>
  );
}

function FeaturePanel() {
  return (
    <aside className="w-[273px] flex flex-col bg-[#f7f7f7] border-r border-[#7f7f7f] text-[14px] shrink-0">
      <div className="h-[25px] mr-0.5 flex items-center justify-center border-y border-[#b9c4c8] mb-1">
        <div className="w-1.5 h-1.5 rounded-full bg-[#ccc] border border-[#999]" />
      </div>
      <div className="h-[26px] mr-0.5 flex border-t border-[#7f7f7f]">
        <button aria-label="FeatureManager" className="w-[41px] flex items-center justify-center pl-1"><PartIcon /></button>
        {managerTabs.map((tab) => (
          <button key={tab.name} aria-label={tab.name} className="w-10 flex items-center justify-center bg-[#d4d4d4] border-l border-b border-[#7f7f7f]">
            {tab.icon}
          </button>
        ))}
        <button aria-label="CAM" className="w-[25px] flex items-center justify-end overflow-hidden bg-[#d4d4d4] border-l border-b border-[#7f7f7f]">
          <Svg size="w-4 h-5" box="0 0 16 20"><path d="M2 1h14v18H2z" fill="#b4b4b4" /><path d="M3 2l6-1v12l-6-3zM9 1h7v8l-3 2v8l-4-6z" fill="#7db9d3" stroke="#2a6a88" /><path d="M3 6h13" stroke="#2a6a88" /></Svg>
        </button>
        <button aria-label="Scroll tabs left" className="w-[23px] mt-0.5 flex items-center justify-center bg-[#f7f7f7] border border-[#b0b0b0]">
          <Svg size="w-2 h-2" box="0 0 8 8"><path d="M6 0v8L2 4z" fill="#000" /></Svg>
        </button>
        <button aria-label="Scroll tabs right" className="flex-1 mt-0.5 flex items-center justify-center bg-[#f7f7f7] border-y border-[#b0b0b0]">
          <Svg size="w-2 h-2" box="0 0 8 8"><path d="M2 0v8l4-4z" fill="#000" /></Svg>
        </button>
      </div>
      <label className="ml-[5px] mr-[5px] h-8 flex items-center border border-[#c0c0c0] pl-0.5">
        <Svg>
          <path d="M1.500 3v3l6.500 6v6.500l4-2.500v-4l6.500-6V3z" fill="#f2f2f2" stroke={DARK} strokeWidth="1.200" /><path d="M1 2h17.500v3H1z" fill="#4c9cbe" stroke="#1d5876" />
        </Svg>
        <input aria-label="Filter tree" className="w-0 flex-1 bg-transparent outline-none" />
      </label>

      {/* TREE */}
      <div className="flex-1 border-l border-[#b9b9b9] mr-0.5 overflow-hidden">
        <div className="h-6 flex items-center pl-1 gap-1 whitespace-pre">
          <PartIcon size="w-[18px] h-[18px]" />
          <span>thomas file  (Default&lt;&lt;Default&gt;_Dis</span>
        </div>
        {tree.map((node) => (
          <div key={node.label} className={clsx("relative h-6 flex items-center whitespace-nowrap", node.off && "text-[#8a8a8a]")}>
            <span className="w-[25px] pl-[9px] shrink-0">
              {node.open && <Svg size="w-1.5 h-2" box="0 0 6 8"><path d="M0 0v8l4.500-4z" fill="#555" /></Svg>}
            </span>
            {node.icon}
            <span className="ml-1">{node.label}</span>
            {node.rollback && <div className="absolute left-0 right-0 -bottom-1 h-1 bg-[#b8b8d4] border-t border-[#d2d2ea]" />}
          </div>
        ))}
      </div>
      <div className="h-[21px] mr-0.5 bg-[#f0f0f0] border-t border-white flex items-center pl-[22px]">
        <div className="w-[169px] h-1.5 bg-[#868686]" />
      </div>
      <div className="h-1 mr-0.5 border-y border-[#c0c0c0]" />
    </aside>
  );
}

function GraphicsArea() {
  return (
    <main className="relative flex-1 bg-white">
      <SketchCanvas />
      <button aria-label="Collapse panel" className="absolute -left-px top-[376px] w-3 h-[49px] flex items-center justify-center bg-[#f7f7f7] border border-l-0 border-[#7f7f7f]">
        <span className="w-1.5 h-1.5 rounded-full bg-[#ccc] border border-[#999]" />
      </button>
      <div className="absolute top-1 right-[39px] opacity-25">
        <Svg size="w-[72px] h-[56px]" box="0 0 72 56">
          <path d="M24 3H3v15q0 9 9 9h12" stroke="#4a93b5" strokeWidth="2" />
          <path d="M25 27l9-9v5c6 0 9-1 12-5 1 9-3 14-12 14v5z" fill="#8dbdd2" stroke="#33586a" strokeWidth="1.500" />
          <path d="M53 38l14 14M67 38L53 52" stroke="#d43b32" strokeWidth="9" strokeLinecap="round" />
        </Svg>
      </div>
      <div className="absolute top-[55px] right-0 w-8 flex flex-col border-l border-t border-[#7f7f7f]">
        {taskPane.map((item, i) => (
          <button key={item.name} aria-label={item.name} className={clsx("h-[30px] flex items-center justify-center border-b border-[#7f7f7f]", i === 0 ? "bg-[#f7f7f7]" : "bg-[#d4d4d4]")}>
            {item.icon}
          </button>
        ))}
      </div>
    </main>
  );
}

function BottomTabs() {
  const arrows = ["M6 4v9M14 4v9L8 8.500z", "M13 4v9L7 8.500z", "M7 4v9l6-4.500z", "M14 4v9M6 4v9l6-4.500z"];
  const names = ["First tab", "Previous tab", "Next tab", "Last tab"];
  return (
    <div className="h-[21px] flex bg-[#f7f7f7] border-b border-[#7f7f7f] text-[14px] leading-5 shrink-0">
      <div className="w-[27px] border-l-2 border-[#a3bcc2]" />
      <div className="flex border-t border-black">
        {arrows.map((d, i) => (
          <button key={d} aria-label={names[i]} className="w-5 bg-[#aaabc4] border border-[#8889a3]">
            <Svg size="w-[18px] h-4" box="1 1 18 15"><path d={d} fill="#7b7c95" stroke="#7b7c95" /></Svg>
          </button>
        ))}
      </div>
      <button className="w-[76px] pl-1 font-bold">Model</button>
      <button className="w-[90px] bg-[#d4d4d4] border-t border-l border-[#7f7f7f]">3D Views</button>
      <button className="w-[144px] bg-[#d4d4d4] border-t border-x border-[#7f7f7f] text-left pl-[13px]">Motion Study 1</button>
      <div className="flex-1 border-t border-[#7f7f7f]" />
    </div>
  );
}

function StatusBar() {
  return (
    <footer className="h-[15px] overflow-hidden bg-[#e6e6e6] text-[14px] shrink-0">
      <div className="h-[26px] flex items-center whitespace-nowrap pl-px">
        <span>SOLIDWORKS Premium 2020 SP0.0</span>
        <span className="ml-auto w-[91px]">-2.54mm</span>
        <span className="w-[78px]">-2.29mm</span>
        <span className="w-14">0mm</span>
        <span className="w-[139px]">Under Defined</span>
        <span className="w-[99px]">
          <Svg><path d="M6 1l6 10H0z" fill="#f9c21c" stroke="#6d4a05" /><path d="M6 4v4M6 9v1" stroke="#000" strokeWidth="1.500" /><path d="M9 16c6 0 6-6 5-10h-3l4-5 4 5h-2c1 8-2 12-8 13z" fill="#222" /></Svg>
        </span>
        <span className="w-[68px]">MMGS</span>
        <Svg size="w-2 h-1" box="0 0 8 4"><path d="M1 4h6L4 0z" fill="#333" /></Svg>
        <Svg className="ml-6"><path d="M1 5l6-4h9l4 8-5 9-6 1z" fill="#e4e4e4" stroke="#444" /><path d="M6 5c4-2 7 0 8 4l-4 3zM3 8l6 8" stroke="#444" /></Svg>
      </div>
    </footer>
  );
}

export default function App() {
  return (
    <div className="h-screen flex flex-col overflow-hidden bg-white text-black text-[13px] font-['Noto_Sans','Open_Sans',sans-serif]">
      <TitleBar />
      <Ribbon />
      <CommandTabs />
      <div className="flex-1 min-h-0 flex">
        <FeaturePanel />
        <GraphicsArea />
      </div>
      <BottomTabs />
      <StatusBar />
    </div>
  );
}
